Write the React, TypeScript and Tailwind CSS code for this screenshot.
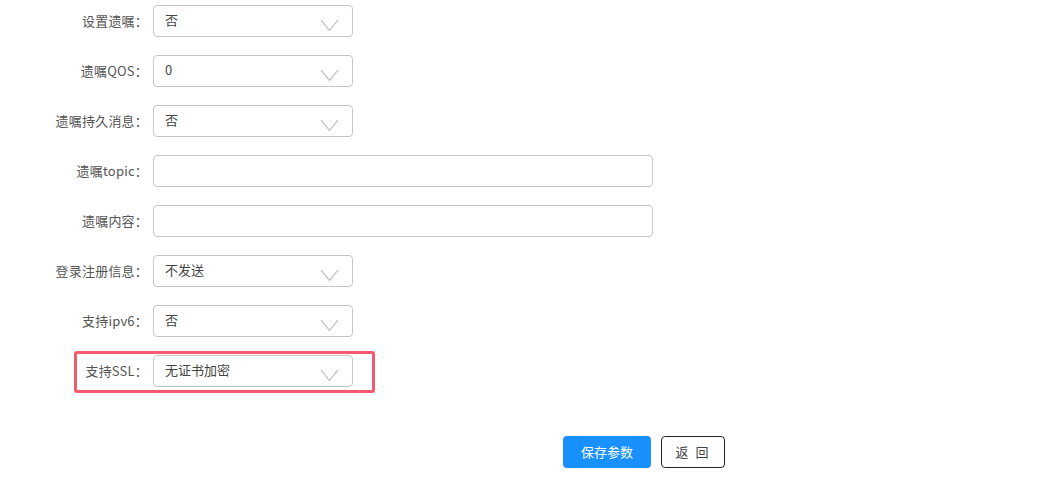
import type { ReactNode } from 'react';

const font = { fontFamily: '"Noto Sans CJK SC", "Noto Sans", sans-serif' };

function Chevron() {
  return (
    <svg width="19" height="13" viewBox="0 0 19 13" className="absolute right-[13px] top-[13px]">
      <polyline points="1,1 9.5,11.5 18,1" fill="none" stroke="#b4b4b4" strokeWidth="1.1" />
    </svg>
  );
}

function Select({ value }: { value: string }) {
  return (
    <div className="relative h-[32px] w-[200px] rounded-[4px] border border-[#c6c6c6] bg-white pl-[11px] text-[13px] leading-[28px] text-[#444]">
      <span>{value}</span>
      <Chevron />
    </div>
  );
}

function Input() {
  return <div className="h-[32px] w-[500px] rounded-[4px] border border-[#c6c6c6] bg-white" />;
}

function Row({ label, children, highlight }: { label: string; children: ReactNode; highlight?: boolean }) {
  return (
    <div className="relative flex h-[32px] items-center">
      <div className="w-[148px] text-right text-[13px] tracking-[0.2px] text-[#555]">{label}</div>
      <div className="ml-[5px]">{children}</div>
      {highlight && (
        <div className="pointer-events-none absolute left-[74px] top-[-4px] h-[42px] w-[301px] rounded-[3px] border-[3px] border-[#f45a6d]" />
      )}
    </div>
  );
}

export default function App() {
  return (
    <div className="h-[484px] w-[1062px] bg-white pt-[5px]" style={font}>
      <div className="flex flex-col gap-[18px]">
        <Row label="设置遗嘱：">
          <Select value="否" />
        </Row>
        <Row label="遗嘱QOS：">
          <Select value="0" />
        </Row>
        <Row label="遗嘱持久消息：">
          <Select value="否" />
        </Row>
        <Row label="遗嘱topic：">
          <Input />
        </Row>
        <Row label="遗嘱内容：">
          <Input />
        </Row>
        <Row label="登录注册信息：">
          <Select value="不发送" />
        </Row>
        <Row label="支持ipv6：">
          <Select value="否" />
        </Row>
        <Row label="支持SSL：" highlight>
          <Select value="无证书加密" />
        </Row>
      </div>
      <div className="mt-[49px] flex gap-[10px] pl-[563px]">
        <button className="h-[32px] w-[88px] rounded-[4px] bg-[#1890ff] text-[13px] text-white">保存参数</button>
        <button className="h-[32px] w-[64px] rounded-[4px] border border-[#222] bg-white text-[13px] tracking-[2px] text-[#444]">返 回</button>
      </div>
    </div>
  );
}
